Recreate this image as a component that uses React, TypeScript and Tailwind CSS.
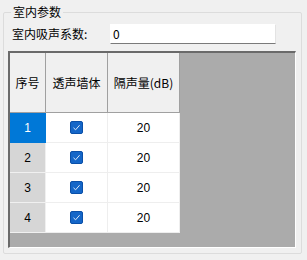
const rows = [
  { id: 1, value: '20', selected: true },
  { id: 2, value: '20', selected: false },
  { id: 3, value: '20', selected: false },
  { id: 4, value: '20', selected: false },
]

function CheckBox() {
  return (
    <span className="flex h-[13px] w-[13px] items-center justify-center rounded-[2px] border border-[#0a4fa8] bg-[#1466c8]">
      <svg width="9" height="9" viewBox="0 0 9 9">
        <path d="M1.5 4.8 L3.6 6.8 L7.6 2.2" fill="none" stroke="#dfeaf8" strokeWidth="1" />
      </svg>
    </span>
  )
}

export default function App() {
  return (
    <div
      className="h-[260px] w-[307px] overflow-hidden bg-[#f0f0f0] pt-[4px] text-[12px] text-black"
      style={{ fontFamily: '"Noto Sans CJK SC", "Liberation Sans", sans-serif' }}
    >
      <fieldset className="ml-[3px] h-[250px] w-[299px] rounded-[2px] border border-[#dcdcdc] px-[4px]">
        <legend className="ml-[3px] px-[2px] leading-[16px]">室内参数</legend>
        <div className="mt-[4px] flex h-[20px] items-center">
          <span className="ml-[4px] w-[98px] leading-[16px]">室内吸声系数:</span>
          <div className="flex h-[20px] w-[166px] items-center border border-b-[#7a7a7a] border-l-white border-r-[#e3e3e3] border-t-white bg-white pl-[2px] leading-[16px]">
            0
          </div>
        </div>
        <div className="mt-[7px] h-[197px] w-[288px] border-b border-l-2 border-r border-t-2 border-b-white border-l-[#6a6a6a] border-r-white border-t-[#6a6a6a] bg-[#ababab]">
          <div className="flex w-fit">
            <div className="flex h-[60px] w-[36px] items-center justify-center border-b border-r border-[#a0a0a0] bg-[#f0f0f0]">
              序号
            </div>
            <div className="flex h-[60px] w-[62px] items-center justify-center border-b border-r border-[#a0a0a0] bg-[#f0f0f0]">
              透声墙体
            </div>
            <div className="flex h-[60px] w-[72px] items-center justify-center border-b border-r border-[#a0a0a0] bg-[#f0f0f0]">
              隔声量(dB)
            </div>
          </div>
          {rows.map((r) => (
            <div key={r.id} className="flex w-fit" style={{ fontFamily: '"Liberation Sans", sans-serif' }}>
              <div
                className={
                  r.selected
                    ? 'flex h-[30px] w-[36px] items-center justify-center border-b border-r border-[#0078d7] bg-[#0078d7] text-white'
                    : 'flex h-[30px] w-[36px] items-center justify-center border-b border-r border-[#f0f0f0] bg-[#d6d6d6]'
                }
              >
                {r.id}
              </div>
              <div className="flex h-[30px] w-[62px] items-center justify-center border-b border-r border-[#eeeeee] bg-white">
                <CheckBox />
              </div>
              <div className="flex h-[30px] w-[72px] items-center justify-center border-b border-r border-[#eeeeee] bg-white">
                {r.value}
              </div>
            </div>
          ))}
        </div>
      </fieldset>
    </div>
  )
}
